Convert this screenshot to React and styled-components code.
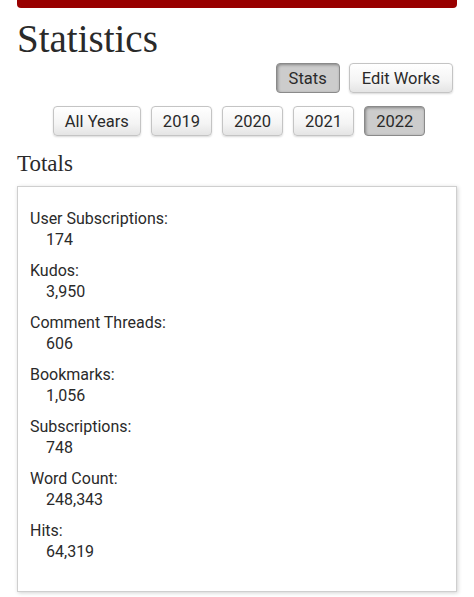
import React from 'react';
import styled, { createGlobalStyle } from 'styled-components';

const GlobalStyle = createGlobalStyle`
  html, body {
    margin: 0;
    padding: 0;
    background: #fff;
  }
  body {
    font-family: Roboto, "Liberation Sans", sans-serif;
    color: #2a2a2a;
  }
`;

const Page = styled.div`
  width: 474px;
  height: 597px;
  overflow: hidden;
  padding: 0 17px;
  box-sizing: border-box;
`;

const TopBar = styled.div`
  height: 8px;
  background: #990000;
  border-radius: 0 0 4px 4px;
`;

const Title = styled.h2`
  margin: 11px 0 0;
  font-family: "Liberation Serif", serif;
  font-weight: 400;
  font-size: 39px;
  line-height: 40px;
  color: #2a2a2a;
`;

const Navigation = styled.div`
  display: flex;
  justify-content: flex-end;
  gap: 9px;
  margin-top: 4px;
  padding-right: 4px;
`;

const YearRow = styled.div`
  display: flex;
  justify-content: center;
  gap: 10px;
  margin-top: 13px;
  padding-left: 4px;
`;

const Button = styled.button`
  font-family: Roboto, "Liberation Sans", sans-serif;
  font-size: 16.5px;
  color: #2a2a2a;
  height: 30px;
  padding: 0 ${(p) => (p.$narrow ? 11 : 12)}px;
  min-width: ${(p) => p.$min || 0}px;
  border: 1px solid ${(p) => (p.$current ? '#8a8a8a' : '#c4c4c4')};
  border-radius: 4px;
  background: ${(p) =>
    p.$current
      ? '#cccccc'
      : 'linear-gradient(#ffffff 0%, #f4f4f4 60%, #e4e4e4 100%)'};
  box-shadow: ${(p) =>
    p.$current
      ? 'inset 1px 1px 3px rgba(0,0,0,0.35)'
      : '0 1px 2px rgba(0,0,0,0.15)'};
  cursor: pointer;
`;

const SectionHeading = styled.h3`
  margin: 15px 0 0;
  font-family: "Liberation Serif", serif;
  font-weight: 400;
  font-size: 23px;
  line-height: 26px;
  color: #2a2a2a;
`;

const StatsBox = styled.dl`
  margin: 9px 0 0;
  border: 1px solid #cfcfcf;
  box-shadow: 1px 1px 4px rgba(0, 0, 0, 0.18);
  background: #fff;
  padding: 21px 12px 29px;
  display: flex;
  flex-direction: column;
  gap: 10px;
`;

const Stat = styled.div`
  font-size: 16px;
  line-height: 21px;
`;

const Label = styled.dt`
  margin: 0;
`;

const Value = styled.dd`
  margin: 0 0 0 16px;
`;

const years = ['All Years', '2019', '2020', '2021', '2022'];

const totals = [
  ['User Subscriptions:', '174'],
  ['Kudos:', '3,950'],
  ['Comment Threads:', '606'],
  ['Bookmarks:', '1,056'],
  ['Subscriptions:', '748'],
  ['Word Count:', '248,343'],
  ['Hits:', '64,319'],
];

export default function App() {
  return (
    <Page>
      <GlobalStyle />
      <TopBar />
      <Title>Statistics</Title>
      <Navigation>
        <Button $current>Stats</Button>
        <Button>Edit Works</Button>
      </Navigation>
      <YearRow>
        {years.map((y) => (
          <Button key={y} $current={y === '2022'} $min={61} $narrow>
            {y}
          </Button>
        ))}
      </YearRow>
      <SectionHeading>Totals</SectionHeading>
      <StatsBox>
        {totals.map(([label, value]) => (
          <Stat key={label}>
            <Label>{label}</Label>
            <Value>{value}</Value>
          </Stat>
        ))}
      </StatsBox>
    </Page>
  );
}
